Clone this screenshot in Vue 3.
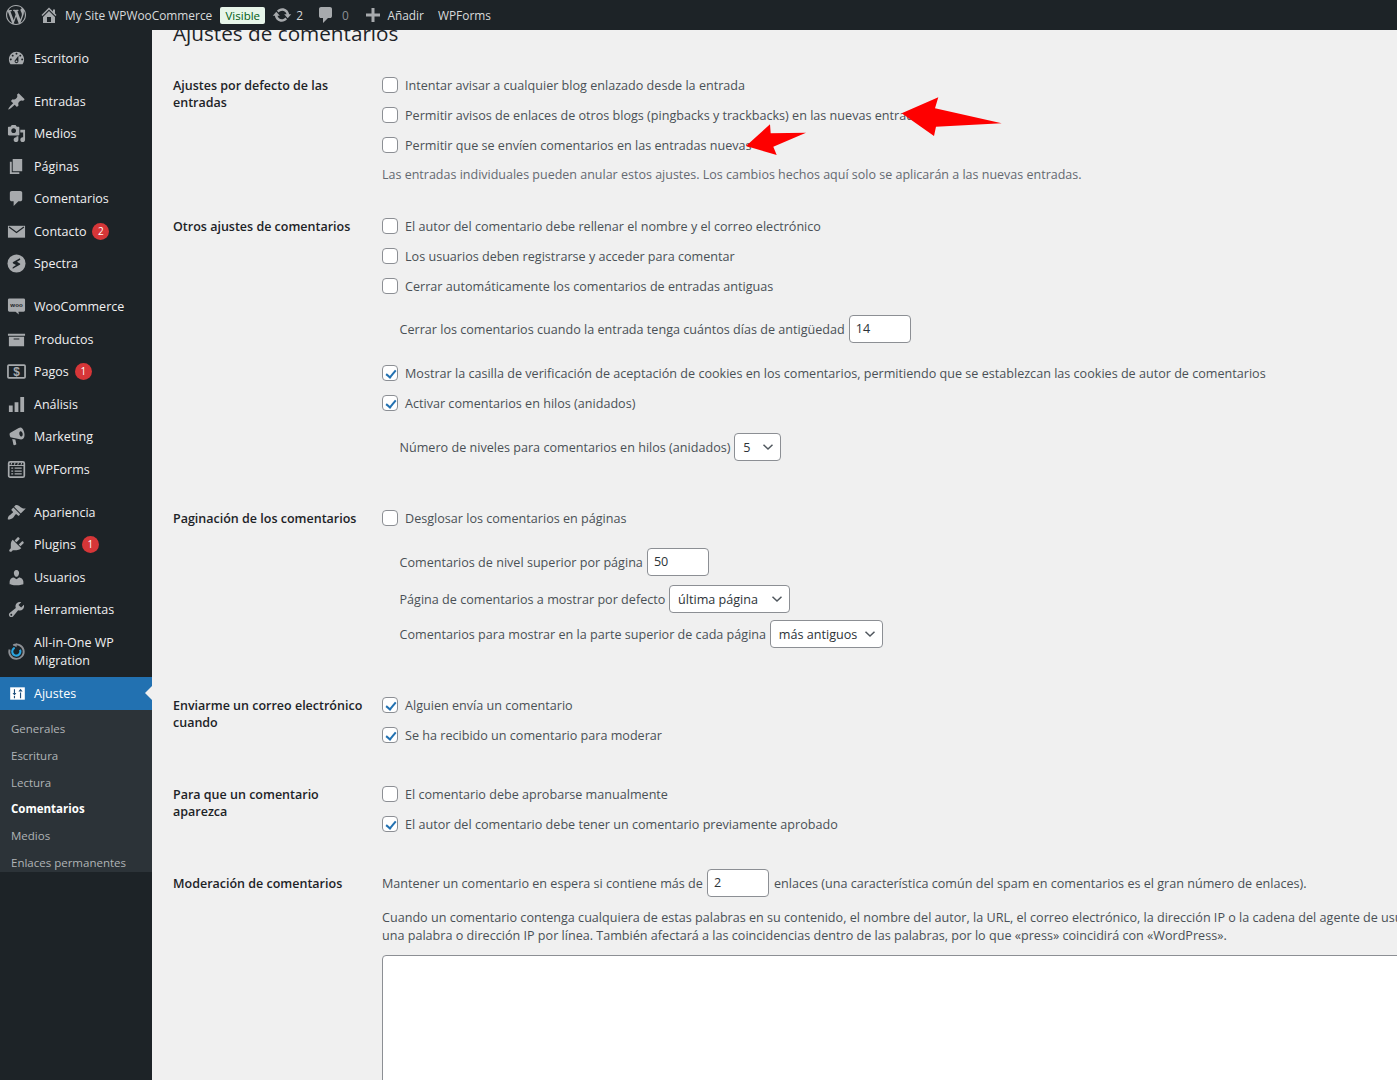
<script setup>
const P = {
  dash: 'M3.76 16h12.48c1.1-1.37 1.76-3.11 1.76-5 0-4.42-3.58-8-8-8s-8 3.58-8 8c0 1.89.66 3.63 1.76 5zM10 4c.55 0 1 .45 1 1s-.45 1-1 1-1-.45-1-1 .45-1 1-1zM6 6c.55 0 1 .45 1 1s-.45 1-1 1-1-.45-1-1 .45-1 1-1zm8 0c.55 0 1 .45 1 1s-.45 1-1 1-1-.45-1-1 .45-1 1-1zm-5.37 5.55L12 7v6c0 1.1-.9 2-2 2s-2-.9-2-2c0-.57.24-1.08.63-1.45zM4 10c.55 0 1 .45 1 1s-.45 1-1 1-1-.45-1-1 .45-1 1-1zm12 0c.55 0 1 .45 1 1s-.45 1-1 1-1-.45-1-1 .45-1 1-1zm-5 3c0-.55-.45-1-1-1s-1 .45-1 1 .45 1 1 1 1-.45 1-1z',
  pin: 'M10.44 3.02l1.82-1.82 6.36 6.35-1.83 1.82c-1.05-.68-2.48-.57-3.41.36l-.75.75c-.92.93-1.04 2.35-.35 3.41l-1.83 1.82-2.41-2.41-2.8 2.79c-.42.42-3.38 2.71-3.8 2.29s1.86-3.39 2.28-3.81l2.79-2.79L4.1 9.36l1.83-1.82c1.05.69 2.48.57 3.4-.36l.75-.75c.93-.92 1.05-2.35.36-3.41z',
  media: 'M13 11V4c0-.55-.45-1-1-1h-1.67L9 1H5L3.67 3H2c-.55 0-1 .45-1 1v7c0 .55.45 1 1 1h10c.55 0 1-.45 1-1zM7 4.5c1.38 0 2.5 1.12 2.5 2.5S8.38 9.5 7 9.5 4.5 8.38 4.5 7 5.62 4.5 7 4.5zM14 6h5v10.5c0 1.38-1.12 2.5-2.5 2.5S14 17.88 14 16.5s1.12-2.5 2.5-2.5c.17 0 .34.02.5.05V9h-3V6zm-4 8.05V13h2v3.5c0 1.38-1.12 2.5-2.5 2.5S7 17.88 7 16.5 8.12 14 9.5 14c.17 0 .34.02.5.05z',
  page: 'M6 15V2h10v13H6zm-1 1h8v2H3V5h2v11z',
  comment: 'M5 2h9q.82 0 1.41.59T16 4v7q0 .82-.59 1.41T14 13h-2l-5 5v-5H5q-.82 0-1.41-.59T3 11V4q0-.82.59-1.41T5 2z',
  products: 'M19 4v2H1V4h18zM2 7h16v10H2V7zm11 3V9H7v1h6z',
  bars: 'M2 11h4v7H2zM8 7.500h4V18H8zM14 2h4v16h-4z',
  mega: 'M18.150 5.940c.460 1.620.380 3.220-.020 4.560-.400 1.340-1.280 2.180-2.300 2.480-.300.080-.600.120-.900.100l-10.300-1.900a2 2 0 0 1-1.500-1.400l-.400-1.500a2 2 0 0 1 .800-2.100l8.800-5.100c.300-.150.600-.280.900-.380 1.120-.320 2.280.080 3.120 1.040.760.880 1.400 2.560 1.800 4.200zM14 4.500c-.900.300-1.300 1.800-.900 3.300s1.500 2.500 2.400 2.200 1.300-1.800.900-3.300S14.900 4.200 14 4.500zM5.500 12.500l3.300.6 1 4.700c.1.500-.2.900-.7 1l-1.400.3c-.5.100-.9-.2-1-.7z',
  brush: 'M14.480 11.060L7.410 3.990l1.500-1.500c.500-.560 2.300-.470 3.510.320 1.210.8 1.430 1.280 2.910 2.100 1.180.640 2.450 1.260 4.450.850zm-.710.710L6.700 4.700 4.930 6.470c-.390.390-.390 1.020 0 1.410l1.060 1.060c.390.390.390 1.030 0 1.420-.600.600-1.430 1.110-2.210 1.690-.350.260-.700.530-1.010.840C1.430 13.230.400 16.660 1 17.260c.590.600 4.020-.440 5.440-1.840.310-.310.580-.660.840-1.010.580-.780 1.090-1.610 1.690-2.210.390-.390 1.030-.390 1.420 0l1.060 1.060c.390.390 1.020.390 1.410 0z',
  plug: 'M13.110 4.360L9.870 7.600 8 5.730l3.240-3.240c.350-.340 1.050-.200 1.560.320.520.510.660 1.210.310 1.550zm-8 1.770l.910-1.120 9.010 9.010-1.190.840c-.710.710-2.630 1.160-3.820 1.160H6.140L4.900 17.260c-.590.590-1.540.590-2.120 0-.590-.580-.590-1.530 0-2.120l1.240-1.240v-3.880c0-1.130.400-3.190 1.090-3.890zm7.260 3.970l3.240-3.240c.340-.350 1.040-.210 1.550.310.520.510.660 1.210.310 1.550l-3.240 3.250z',
  user: 'M10 9.250c-2.270 0-2.730-3.440-2.730-3.440C7 4.020 7.820 2 9.970 2c2.160 0 2.980 2.020 2.710 3.810 0 0-.410 3.440-2.680 3.440zm0 2.570L12.720 10c2.390 0 4.520 2.330 4.520 4.530v2.490s-3.650 1.130-7.240 1.130c-3.650 0-7.240-1.130-7.240-1.130v-2.490c0-2.250 1.940-4.480 4.470-4.480z',
  tool: 'M16.680 9.770c-1.340 1.340-3.300 1.670-4.950.990l-5.410 6.520c-.990.990-2.590.990-3.580 0s-.990-2.590 0-3.570l6.520-5.420c-.680-1.650-.350-3.610.990-4.950 1.280-1.280 3.120-1.620 4.720-1.060l-2.890 2.890 2.820 2.820 2.860-2.870c.530 1.580.180 3.390-1.080 4.670zM3.810 16.210c.400.390 1.040.390 1.430 0 .400-.400.400-1.040 0-1.430-.390-.400-1.030-.400-1.430 0-.390.390-.390 1.030 0 1.430z'
}

const groups = [
  [{ icon: 'dash', label: 'Escritorio' }],
  [
    { icon: 'pin', label: 'Entradas' },
    { icon: 'media', label: 'Medios' },
    { icon: 'page', label: 'Páginas' },
    { icon: 'comment', label: 'Comentarios' },
    { icon: 'mail', label: 'Contacto', badge: 2 },
    { icon: 'spectra', label: 'Spectra' }
  ],
  [
    { icon: 'woo', label: 'WooCommerce' },
    { icon: 'products', label: 'Productos' },
    { icon: 'pay', label: 'Pagos', badge: 1 },
    { icon: 'bars', label: 'Análisis' },
    { icon: 'mega', label: 'Marketing' },
    { icon: 'forms', label: 'WPForms' }
  ],
  [
    { icon: 'brush', label: 'Apariencia' },
    { icon: 'plug', label: 'Plugins', badge: 1 },
    { icon: 'user', label: 'Usuarios' },
    { icon: 'tool', label: 'Herramientas' },
    { icon: 'aio', label: 'All-in-One WP Migration', tall: true }
  ]
]
const subItems = ['Generales', 'Escritura', 'Lectura', 'Comentarios', 'Medios', 'Enlaces permanentes']
</script>

<template>
  <div class="page">
    <header class="topbar">
      <svg class="wp" viewBox="0 0 20 20"><path d="M20 10c0-5.510-4.490-10-10-10C4.480 0 0 4.490 0 10c0 5.520 4.480 10 10 10 5.510 0 10-4.480 10-10zM7.780 15.370L4.370 6.220c.550-.020 1.170-.080 1.170-.080.500-.060.440-1.130-.060-1.110 0 0-1.450.110-2.370.110-.180 0-.370 0-.580-.010C4.120 2.690 6.870 1.110 10 1.110c2.330 0 4.450.870 6.050 2.340-.680-.110-1.650.390-1.650 1.580 0 .740.450 1.360.900 2.100.350.610.550 1.360.550 2.460 0 1.490-1.400 5-1.400 5l-3.030-8.370c.540-.020.820-.170.820-.170.500-.050.440-1.250-.060-1.220 0 0-1.440.120-2.380.120-.870 0-2.330-.120-2.330-.120-.500-.030-.560 1.200-.060 1.220l.920.080 1.260 3.410zM17.410 10c.240-.640.740-1.870.43-4.250.700 1.290 1.050 2.710 1.050 4.250 0 3.290-1.730 6.240-4.400 7.780.970-2.590 1.940-5.200 2.920-7.780zM6.100 18.090C3.120 16.650 1.110 13.530 1.110 10c0-1.300.230-2.480.720-3.590C3.250 10.300 4.670 14.200 6.100 18.090zm4.030-6.630l2.580 6.980c-.860.290-1.760.450-2.710.450-.790 0-1.570-.110-2.290-.330.810-2.380 1.620-4.740 2.420-7.100z"/></svg>
      <svg class="bar-ic home" viewBox="0 0 20 20"><path d="M16 8.500l1.530 1.530-1.060 1.060L10 4.620l-6.470 6.470-1.060-1.060L10 2.500l4 4v-2h2v4zm-6-2.460l6 5.990V18H4v-5.970zM12 17v-5H8v5h4z"/></svg>
      <span class="site">My Site WPWooCommerce</span>
      <span class="visible">Visible</span>
      <svg class="bar-ic upd" viewBox="0 0 20 20"><path d="M10.200 3.280c3.530 0 6.430 2.610 6.920 6h2.080l-3.500 4-3.500-4h2.320c-.450-1.970-2.210-3.450-4.320-3.450-1.450 0-2.730.710-3.540 1.780L4.950 5.660C6.230 4.200 8.110 3.280 10.200 3.280zm-.400 13.440c-3.520 0-6.430-2.610-6.920-6H.800l3.500-4c1.170 1.330 2.330 2.670 3.500 4H5.480c.450 1.970 2.210 3.450 4.320 3.450 1.450 0 2.730-.710 3.540-1.780l1.710 1.950c-1.280 1.460-3.150 2.380-5.250 2.380z"/></svg>
      <span class="count">2</span>
      <svg class="bar-ic cmt" viewBox="0 0 20 20"><path :d="P.comment"/></svg>
      <span class="count zero">0</span>
      <svg class="bar-ic add" viewBox="0 0 20 20"><path d="M17 8.500v3h-5.500V17h-3v-5.500H3v-3h5.500V3h3v5.500z"/></svg>
      <span class="add-label">Añadir</span>
      <span class="forms-label">WPForms</span>
    </header>

    <div class="shell">
      <aside class="sidebar">
        <ul v-for="(group, gi) in groups" :key="gi" class="group">
          <li v-for="item in group" :key="item.label" class="item" :class="{ tall: item.tall }">
            <span class="ic">
              <svg v-if="P[item.icon]" viewBox="0 0 20 20"><path :d="P[item.icon]"/></svg>
              <svg v-else-if="item.icon === 'mail'" viewBox="0 0 20 20">
                <rect x="1" y="4" width="18" height="12.500"/>
                <path class="vline" d="M2.200 5.200L10 11l7.800-5.800"/>
              </svg>
              <svg v-else-if="item.icon === 'spectra'" viewBox="0 0 20 20">
                <circle cx="10" cy="10" r="9.500"/>
                <path class="cut" d="M13.500 4.500L6.500 8.500c-.6.400-.6 1 0 1.400l3 1.600-3.500 2.500v1.500l7.500-4.200c.6-.4.6-1 0-1.400l-3-1.700 3.500-2.100z"/>
              </svg>
              <svg v-else-if="item.icon === 'woo'" viewBox="0 0 20 20">
                <path d="M2.500 1.500h15a1.500 1.500 0 0 1 1.500 1.500v11a1.500 1.500 0 0 1-1.500 1.500H12l.5 3-3.500-3H2.500A1.500 1.500 0 0 1 1 14V3a1.500 1.500 0 0 1 1.500-1.500z"/>
                <text class="woo-t" x="10" y="10.700" text-anchor="middle">woo</text>
              </svg>
              <svg v-else-if="item.icon === 'pay'" viewBox="0 0 20 20">
                <rect class="line" x="1" y="3.200" width="18" height="13.600" rx="1"/>
                <text class="pay-t" x="10" y="14.300" text-anchor="middle">$</text>
              </svg>
              <svg v-else-if="item.icon === 'forms'" viewBox="0 0 20 20">
                <rect class="line" x="1.800" y="2" width="16.400" height="16" rx="1.500"/>
                <path d="M2 5.200h16v1H2zM4.500 2.500h1.200l-.8 2.500H3.700zM8 2.500h1.200l-.8 2.500H7.200zM11.500 2.500h1.200l-.8 2.500h-1.200zM15 2.500h1.200l-.8 2.500h-1.200zM4.500 8h2v1.300h-2zM8 8h7.500v1.300H8zM4.500 11h2v1.300h-2zM8 11h7.500v1.300H8zM4.500 14h2v1.300h-2zM8 14h7.500v1.300H8z"/>
              </svg>
              <svg v-else-if="item.icon === 'aio'" viewBox="0 0 20 20">
                <path class="ring" d="M6.500 3.400A7.600 7.600 0 1 1 2.700 8"/>
                <path class="ring-g" d="M10.500 1.200L7 3.300l3 2.300z"/>
                <path class="ring-b" d="M13.700 8.200a4.300 4.300 0 1 1-5.600-2.100"/>
              </svg>
            </span>
            <span class="lbl">{{ item.label }}</span>
            <span v-if="item.badge" class="badge">{{ item.badge }}</span>
          </li>
        </ul>
        <div class="item current">
          <span class="ic">
            <svg viewBox="0 0 20 20">
              <rect class="white" x="2.300" y="3.500" width="15.400" height="13"/>
              <path class="blue" d="M6.200 5.500h1.200v4h1.400L6.800 12 4.800 9.500h1.400zM6.200 12.500h1.200v2.500H6.200zM12.600 9h1.200v6h-1.200zM13.200 5l2.200 3h-4.400z"/>
            </svg>
          </span>
          <span class="lbl">Ajustes</span>
        </div>
        <ul class="submenu">
          <li v-for="s in subItems" :key="s" :class="{ on: s === 'Comentarios' }">{{ s }}</li>
        </ul>
      </aside>

      <main class="content">
        <h1>Ajustes de comentarios</h1>

        <section class="sec s1">
          <h2>Ajustes por defecto de las entradas</h2>
          <div class="fields">
            <label class="row"><i class="cb"></i>Intentar avisar a cualquier blog enlazado desde la entrada</label>
            <label class="row"><i class="cb"></i>Permitir avisos de enlaces de otros blogs (pingbacks y trackbacks) en las nuevas entradas</label>
            <label class="row"><i class="cb"></i>Permitir que se envíen comentarios en las entradas nuevas</label>
            <p class="desc d1">Las entradas individuales pueden anular estos ajustes. Los cambios hechos aquí solo se aplicarán a las nuevas entradas.</p>
          </div>
        </section>

        <section class="sec s2">
          <h2>Otros ajustes de comentarios</h2>
          <div class="fields">
            <label class="row"><i class="cb"></i>El autor del comentario debe rellenar el nombre y el correo electrónico</label>
            <label class="row"><i class="cb"></i>Los usuarios deben registrarse y acceder para comentar</label>
            <label class="row"><i class="cb"></i>Cerrar automáticamente los comentarios de entradas antiguas</label>
            <div class="row sub mt13">Cerrar los comentarios cuando la entrada tenga cuántos días de antigüedad <span class="inp">14</span></div>
            <label class="row mt14"><i class="cb on"></i>Mostrar la casilla de verificación de aceptación de cookies en los comentarios, permitiendo que se establezcan las cookies de autor de comentarios</label>
            <label class="row"><i class="cb on"></i>Activar comentarios en hilos (anidados)</label>
            <div class="row sub mt14">Número de niveles para comentarios en hilos (anidados) <span class="sel w5">5<svg viewBox="0 0 12 8"><path d="M1.500 1.800L6 6l4.500-4.200"/></svg></span></div>
          </div>
        </section>

        <section class="sec s3">
          <h2>Paginación de los comentarios</h2>
          <div class="fields">
            <label class="row"><i class="cb"></i>Desglosar los comentarios en páginas</label>
            <div class="row sub mt14">Comentarios de nivel superior por página <span class="inp">50</span></div>
            <div class="row sub mt7">Página de comentarios a mostrar por defecto <span class="sel wl">última página<svg viewBox="0 0 12 8"><path d="M1.500 1.800L6 6l4.500-4.200"/></svg></span></div>
            <div class="row sub mt5">Comentarios para mostrar en la parte superior de cada página <span class="sel wa">más antiguos<svg viewBox="0 0 12 8"><path d="M1.500 1.800L6 6l4.500-4.200"/></svg></span></div>
          </div>
        </section>

        <section class="sec s4">
          <h2>Enviarme un correo electrónico cuando</h2>
          <div class="fields">
            <label class="row"><i class="cb on"></i>Alguien envía un comentario</label>
            <label class="row"><i class="cb on"></i>Se ha recibido un comentario para moderar</label>
          </div>
        </section>

        <section class="sec s5">
          <h2>Para que un comentario aparezca</h2>
          <div class="fields">
            <label class="row"><i class="cb"></i>El comentario debe aprobarse manualmente</label>
            <label class="row"><i class="cb on"></i>El autor del comentario debe tener un comentario previamente aprobado</label>
          </div>
        </section>

        <section class="sec s6">
          <h2>Moderación de comentarios</h2>
          <div class="fields">
            <div class="row">Mantener un comentario en espera si contiene más de <span class="inp mr">2</span>enlaces (una característica común del spam en comentarios es el gran número de enlaces).</div>
            <p class="desc d2">Cuando un comentario contenga cualquiera de estas palabras en su contenido, el nombre del autor, la URL, el correo electrónico, la dirección IP o la cadena del agente de usuario<br>una palabra o dirección IP por línea. También afectará a las coincidencias dentro de las palabras, por lo que «press» coincidirá con «WordPress».</p>
            <div class="ta"></div>
          </div>
        </section>

        <svg class="arrows" viewBox="0 0 900 130">
          <path d="M749.700 83.300L786.300 67.300 783 78.300 849.700 93.300 784 96.700 782 106z"/>
          <path d="M594 116L618 94.300 618.700 103.300 654 102.700 621.300 116.700 624.700 125z"/>
        </svg>
      </main>
    </div>
  </div>
</template>

<style>
html, body { margin: 0; height: 100%; overflow: hidden; background: #f0f0f0; }
</style>

<style scoped>
.page { width: 1397px; height: 1080px; overflow: hidden; font-family: "Open Sans", "Noto Sans", sans-serif; font-size: 12.600px; color: #4a5056; background: #f0f0f0; }

.topbar { height: 30px; background: #1d2327; display: flex; align-items: center; color: #d8dadb; font-size: 11.900px; padding-left: 6px; box-sizing: border-box; }
.topbar svg { fill: #a7aaad; flex: none; }
.wp { width: 20px; height: 20px; }
.bar-ic { width: 20px; height: 20px; }
.home { margin-left: 13px; }
.site { margin-left: 6px; }
.visible { margin-left: 8px; width: 45px; text-align: center; background: #e7f5e9; color: #005c12; height: 17px; line-height: 17px; border-radius: 2px; font-size: 11.500px; }
.upd { margin-left: 7px; }
.count { margin-left: 4px; }
.cmt { margin-left: 13px; }
.zero { color: #8c8f94; margin-left: 6px; }
.add { margin-left: 14.500px; }
.add-label { margin-left: 4px; }
.forms-label { margin-left: 14px; }

.shell { display: flex; height: 1050px; }
.sidebar { width: 152px; flex: none; background: #1d2327; font-size: 12.500px; padding-top: 12px; box-sizing: border-box; }
.group { list-style: none; margin: 0; padding: 0; }
.group + .group { margin-top: 10.500px; }
.item { height: 32.500px; display: flex; align-items: center; position: relative; }
.item.tall { height: 51px; line-height: 17.500px; }
.item.tall .lbl { width: 100px; }
.ic { width: 34px; flex: none; display: flex; justify-content: center; padding-right: 1px; box-sizing: border-box; }
.current .ic { padding-right: 0; padding-left: 1px; }
.ic svg { width: 19px; height: 19px; fill: #a7aaad; }
.lbl { color: #f0f0f1; }
.cut { fill: #1d2327; }
.ic svg .vline { fill: none; stroke: #1d2327; stroke-width: 1.300; }
.woo-t { font-size: 6.500px; font-weight: 700; fill: #1d2327; font-family: "Liberation Sans", sans-serif; }
.pay-t { font-size: 12.500px; font-weight: 700; fill: #a7aaad; font-family: "Liberation Sans", sans-serif; }
.ic svg .line { fill: none; stroke: #a7aaad; stroke-width: 1.800; }
.ic svg .ring { fill: none; stroke: #8c8f94; stroke-width: 2; }
.ic svg .ring-g { fill: #8c8f94; }
.ic svg .ring-b { fill: none; stroke: #2aa5e0; stroke-width: 2.200; }
.badge { margin-left: 6px; width: 17px; height: 17px; border-radius: 50%; background: #d63638; color: #fff; font-size: 10px; line-height: 17px; text-align: center; }
.current { background: #2271b1; }
.current .lbl { color: #fff; }
.current::after { content: ""; position: absolute; right: 0; top: 50%; margin-top: -7px; border: 7px solid transparent; border-right-color: #f0f0f0; border-left: 0; }
.ic svg .white { fill: #fff; }
.ic svg .blue { fill: #1d4f7c; }
.submenu { list-style: none; margin: 0; padding: 10.500px 0 0 11px; background: #2c3338; display: flex; flex-direction: column; gap: 8.800px; font-size: 11.500px; line-height: 18px; color: #b0b3b6; }
.submenu .on { color: #fff; font-weight: 700; }

.content { flex: 1; min-width: 0; position: relative; overflow: hidden; padding-left: 21px; }
h1 { margin: -12px 0 0; font-size: 20.700px; font-weight: 400; line-height: 30px; color: #1d2327; height: 30px; white-space: nowrap; }
.sec { display: flex; }
.s1 { margin-top: 22px; }
.s2 { margin-top: 27px; }
.s3 { margin-top: 41px; }
.s4 { margin-top: 41px; }
.s5 { margin-top: 29px; }
.s6 { margin-top: 29px; }
h2 { width: 209px; flex: none; box-sizing: border-box; margin: 0; padding: 7px 8px 0 0; font-size: 12.500px; font-weight: 600; line-height: 17px; color: #1d2327; }
.fields { flex: 1; min-width: 0; }
.row { height: 30px; display: flex; align-items: center; white-space: nowrap; }
.sub { padding-left: 17.500px; white-space: pre; }
.mt13 { margin-top: 13px; }
.mt14 { margin-top: 14px; }
.mt7 { margin-top: 7px; }
.mt5 { margin-top: 5px; }
.cb { width: 14px; height: 14px; flex: none; border: 1px solid #8c8f94; border-radius: 4px; background: #fff; margin-right: 7px; position: relative; box-sizing: content-box; }
.cb.on::after { content: ""; position: absolute; left: 4.500px; top: 1.500px; width: 4px; height: 8px; border: solid #2271b1; border-width: 0 2px 2px 0; transform: rotate(40deg); }
.inp { width: 62px; height: 28px; box-sizing: border-box; border: 1px solid #8c8f94; border-radius: 4px; background: #fff; margin-left: 4px; padding-left: 6px; line-height: 26px; color: #2c3338; display: inline-block; }
.sub .inp { margin-left: 0.800px; }
.mr { margin-right: 5px; }
.sel { height: 28px; box-sizing: border-box; border: 1px solid #8c8f94; border-radius: 4px; background: #fff; margin-left: 0.500px; display: inline-flex; align-items: center; justify-content: space-between; padding: 0 6px 0 8px; color: #2c3338; }
.sel svg { width: 12px; height: 8px; fill: none; stroke: #50575e; stroke-width: 1.500; }
.w5 { width: 47px; }
.wl { width: 121px; }
.wa { width: 113px; }
.desc { margin: 0; line-height: 18px; }
.d1 { margin-top: 6px; color: #646970; font-size: 12.500px; }
.d2 { margin-top: 11px; white-space: nowrap; }
.ta { margin-top: 10px; width: 1100px; height: 300px; background: #fff; border: 1px solid #8c8f94; border-radius: 4px; box-sizing: border-box; }

.arrows { position: absolute; left: 0; top: 0; width: 900px; height: 130px; fill: #fe0000; }
</style>
